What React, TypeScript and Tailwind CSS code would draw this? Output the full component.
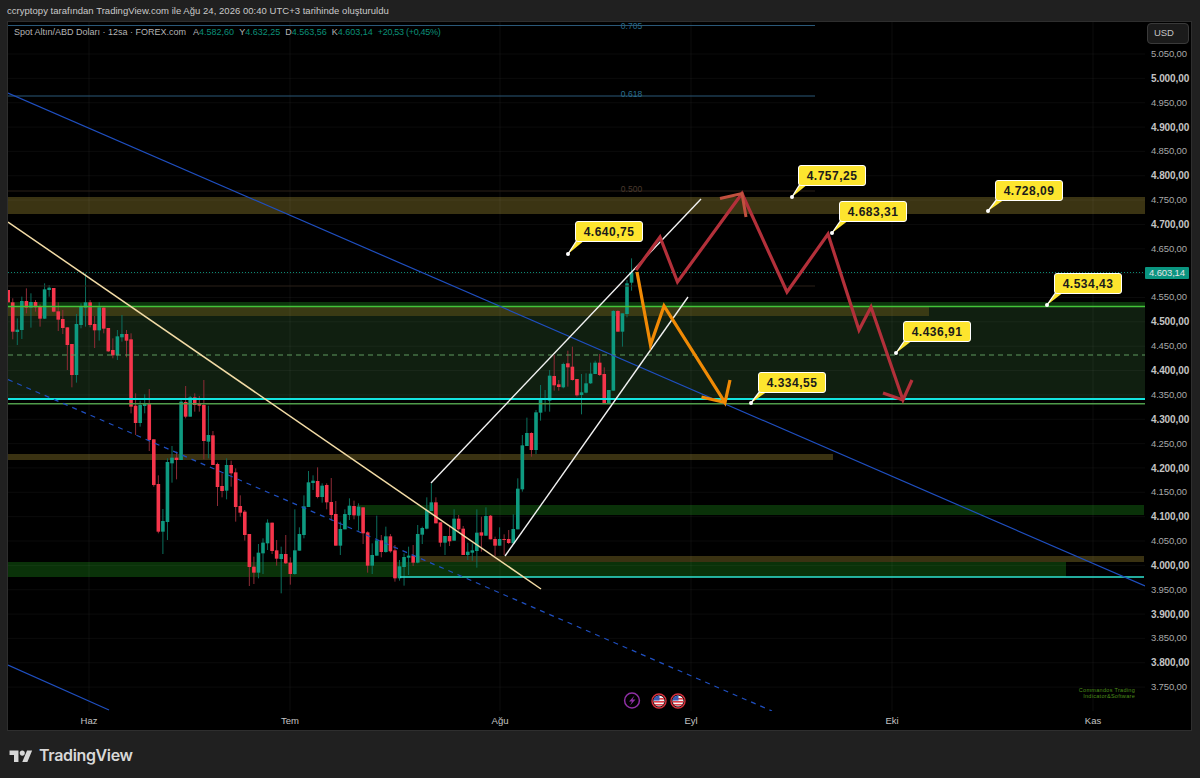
import React from 'react'

// page coordinates: plot starts at (8,22), 1137x689
type Row = [string, number, number, number, number]

// rows are read at 3x, y0 is the offset of each block
const blocks: { y0: number; rows: Row[] }[] = [
  {
    y0: 270,
    rows: [
      ['r', 60, 97, 60, 97], ['r', 97, 185, 85, 208], ['g', 179, 186, 145, 225], ['g', 93, 180, 80, 207],
      ['r', 93, 113, 55, 130], ['g', 96, 113, 70, 173], ['r', 96, 112, 90, 125], ['r', 110, 146, 103, 170],
      ['g', 58, 146, 40, 147], ['g', 53, 60, 45, 80], ['r', 54, 125, 54, 127], ['r', 124, 149, 97, 183],
      ['r', 147, 174, 120, 192], ['r', 172, 225, 172, 300], ['r', 222, 315, 222, 352], ['g', 162, 315, 132, 338],
      ['g', 108, 165, 100, 175], ['g', 97, 113, 10, 170], ['r', 97, 165, 90, 172], ['r', 162, 181, 138, 234],
      ['g', 112, 181, 97, 212], ['r', 113, 176, 110, 190], ['r', 174, 244, 174, 246], ['r', 240, 256, 205, 265],
      ['g', 199, 256, 180, 270], ['g', 192, 202, 135, 215], ['r', 192, 212, 180, 262], ['r', 208, 410, 190, 430],
    ],
  },
  {
    y0: 370,
    rows: [
      ['r', 107, 159, 70, 195], ['g', 105, 159, 92, 170], ['g', 102, 108, 73, 130], ['r', 102, 210, 57, 243],
      ['r', 208, 345, 208, 350], ['r', 342, 485, 316, 490], ['g', 453, 485, 417, 552], ['g', 276, 456, 265, 510],
      ['g', 263, 280, 228, 338], ['r', 263, 270, 245, 328], ['g', 95, 270, 85, 270], ['r', 96, 140, 48, 145],
      ['g', 82, 140, 78, 140], ['r', 82, 105, 70, 125], ['r', 100, 107, 78, 125], ['r', 105, 213, 30, 268],
      ['g', 195, 215, 107, 265], ['r', 196, 285, 183, 285], ['r', 282, 351, 278, 408], ['r', 348, 363, 310, 382],
      ['g', 285, 362, 265, 388], ['r', 285, 310, 272, 350], ['r', 307, 411, 295, 455], ['r', 408, 428, 376, 440],
      ['r', 425, 495, 420, 512], ['r', 492, 591, 492, 648], ['r', 590, 608, 560, 642], ['g', 548, 608, 522, 625],
      ['g', 518, 550, 505, 612], ['g', 458, 520, 448, 540], ['r', 458, 543, 458, 552], ['r', 541, 566, 510, 587],
      ['g', 552, 567, 530, 670], ['r', 552, 580, 495, 582], ['r', 578, 612, 562, 644], ['g', 541, 612, 418, 614],
      ['g', 492, 542, 472, 542], ['g', 409, 495, 376, 505], ['g', 337, 411, 303, 411], ['g', 332, 339, 316, 360],
      ['r', 333, 381, 292, 385], ['g', 347, 381, 340, 398], ['r', 345, 397, 340, 418], ['r', 396, 435, 324, 452],
      ['r', 432, 527, 393, 527], ['g', 477, 527, 455, 555], ['g', 432, 478, 418, 478], ['g', 407, 435, 385, 450],
      ['r', 408, 436, 392, 448], ['g', 410, 437, 400, 482], ['r', 412, 490, 412, 522], ['r', 487, 587, 484, 608],
      ['g', 555, 587, 520, 612], ['g', 511, 557, 437, 557], ['r', 511, 546, 495, 562], ['g', 499, 546, 470, 548],
      ['r', 499, 544, 492, 548], ['r', 541, 625, 525, 635], ['g', 589, 625, 570, 632], ['g', 561, 591, 550, 647],
      ['g', 557, 563, 530, 615], ['r', 557, 578, 525, 588], ['g', 492, 578, 465, 580], ['g', 474, 494, 470, 522],
      ['g', 420, 476, 382, 478],
    ],
  },
  {
    y0: 400,
    rows: [
      ['g', 307, 333, 250, 333], ['r', 307, 370, 292, 370], ['r', 367, 428, 367, 440], ['g', 408, 428, 408, 465],
      ['r', 408, 424, 378, 438], ['g', 356, 422, 328, 422], ['r', 356, 388, 345, 392], ['r', 386, 465, 378, 465],
      ['g', 455, 465, 428, 480], ['g', 451, 458, 430, 482], ['g', 398, 453, 328, 503], ['r', 397, 407, 350, 455],
      ['g', 348, 407, 322, 408], ['r', 347, 418, 345, 418], ['r', 417, 437, 410, 468], ['g', 417, 437, 382, 437],
      ['r', 417, 420, 403, 465], ['r', 417, 429, 390, 432], ['g', 387, 430, 343, 430], ['g', 266, 388, 235, 388],
      ['g', 136, 268, 105, 275], ['g', 99, 138, 53, 138], ['r', 99, 150, 97, 170], ['g', 37, 150, 30, 162],
    ],
  },
  {
    y0: 230,
    rows: [
      ['g', 507, 548, 465, 572], ['g', 505, 510, 480, 545], ['g', 437, 512, 420, 545], ['r', 438, 466, 375, 482],
      ['r', 463, 471, 450, 482], ['g', 402, 472, 398, 475], ['r', 400, 412, 362, 470], ['r', 410, 450, 350, 452],
      ['r', 447, 496, 447, 500], ['g', 487, 495, 432, 553], ['g', 460, 488, 430, 490], ['g', 431, 460, 398, 462],
      ['g', 398, 432, 392, 432], ['r', 398, 435, 372, 438], ['r', 432, 522, 412, 522], ['g', 480, 520, 480, 520],
      ['g', 243, 482, 240, 482], ['r', 243, 305, 240, 305], ['g', 250, 305, 250, 350], ['g', 160, 252, 150, 262],
      ['g', 128, 158, 85, 182],
    ],
  },
]

const candles = blocks.flatMap((b) =>
  b.rows.map((r) => ({
    up: r[0] === 'g',
    top: b.y0 + r[1] / 3,
    bot: b.y0 + r[2] / 3,
    wt: b.y0 + r[3] / 3,
    wb: b.y0 + r[4] / 3,
  }))
)

const prices = [
  '5.050,00', '5.000,00', '4.950,00', '4.900,00', '4.850,00', '4.800,00', '4.750,00', '4.700,00', '4.650,00',
  '', '4.550,00', '4.500,00', '4.450,00', '4.400,00', '4.350,00', '4.300,00', '4.250,00', '4.200,00', '4.150,00',
  '4.100,00', '4.050,00', '4.000,00', '3.950,00', '3.900,00', '3.850,00', '3.800,00', '3.750,00',
]

const months = [
  { t: 'Haz', x: 89 },
  { t: 'Tem', x: 290 },
  { t: 'Ağu', x: 500 },
  { t: 'Eyl', x: 691 },
  { t: 'Eki', x: 892 },
  { t: 'Kas', x: 1093 },
]

const callouts = [
  { t: '4.640,75', x: 575, y: 221, dx: 568, dy: 254 },
  { t: '4.757,25', x: 798, y: 165, dx: 792, dy: 197 },
  { t: '4.683,31', x: 839, y: 201, dx: 832, dy: 233 },
  { t: '4.728,09', x: 995, y: 180, dx: 988, dy: 211 },
  { t: '4.534,43', x: 1054, y: 273, dx: 1047, dy: 305 },
  { t: '4.436,91', x: 903, y: 321, dx: 896, dy: 353 },
  { t: '4.334,55', x: 758, y: 372, dx: 751, dy: 403 },
]

const zones = [
  { x: 8, w: 1137, y: 197, h: 17, c: '#3b3413' },
  { x: 8, w: 1137, y: 302, h: 5, c: '#0c350c' },
  { x: 8, w: 1137, y: 307, h: 92, c: '#101f10' },
  { x: 8, w: 921, y: 307, h: 9, c: '#3a3a14' },
  { x: 8, w: 825, y: 454, h: 6, c: '#3a3212' },
  { x: 357, w: 787, y: 505, h: 10, c: '#0a3209' },
  { x: 418, w: 726, y: 556, h: 6, c: '#3a3212' },
  { x: 8, w: 1058, y: 562, h: 15, c: '#0a3209' },
]

const fibs = [
  { t: '0.705', y: 25.5, ty: 27, c: '#2a5878', tc: '#2a6a8a' },
  { t: '0.618', y: 96, ty: 95, c: '#2a5878', tc: '#2a6f90' },
  { t: '0.500', y: 191, ty: 190, c: '#2a2018', tc: '#4a3a2e' },
  { t: '', y: 286, ty: 285, c: '#2a2018', tc: '' },
]

function Flag({ cx }: { cx: number }) {
  return (
    <g>
      <clipPath id={`flag${cx}`}>
        <circle cx={cx} cy={701} r={5.5} />
      </clipPath>
      <g clipPath={`url(#flag${cx})`}>
        <rect x={cx - 6} y={695} width={12} height={12} fill="#f4f4f4" />
        <rect x={cx - 6} y={698} width={12} height={1.6} fill="#e0404a" />
        <rect x={cx - 6} y={701} width={12} height={1.6} fill="#e0404a" />
        <rect x={cx - 6} y={704} width={12} height={1.6} fill="#e0404a" />
        <rect x={cx - 6} y={695} width={6.5} height={5.5} fill="#3b5bb5" />
      </g>
      <circle cx={cx} cy={701} r={7} fill="none" stroke="#d9303c" strokeWidth={1.4} />
    </g>
  )
}

function ChartDrawing() {
  return (
    <svg className="absolute inset-0 h-full w-full" viewBox="8 22 1137 689">
      {zones.map((z, i) => (
        <rect key={i} x={z.x} y={z.y} width={z.w} height={z.h} fill={z.c} />
      ))}

      {Array.from({ length: 28 }, (_, i) => (
        <line key={i} x1={8} x2={1145} y1={54 + i * 24.35} y2={54 + i * 24.35} stroke="#fff" strokeOpacity={0.045} />
      ))}
      {months.map((m) => (
        <line key={m.t} x1={m.x} x2={m.x} y1={22} y2={711} stroke="#fff" strokeOpacity={0.05} />
      ))}

      {candles.map((c, i) => {
        const x = 8.2 + 4.55 * i
        return (
          <g key={i}>
            <line x1={x} x2={x} y1={c.wt} y2={c.wb} stroke={c.up ? '#0b6e5d' : '#8e2b36'} strokeWidth={1} />
            <rect x={x - 1.8} y={c.top} width={3.6} height={c.bot - c.top} fill={c.up ? '#0e9a80' : '#f5354b'} />
          </g>
        )
      })}

      {fibs.map((f) => (
        <g key={f.y}>
          <line x1={8} x2={815} y1={f.y} y2={f.y} stroke={f.c} strokeWidth={1.2} />
          {f.t && (
            <text x={631.5} y={f.ty} textAnchor="middle" fill={f.tc} fontSize={8.5} dominantBaseline="middle" fontFamily="'Liberation Sans', sans-serif">
              {f.t}
            </text>
          )}
        </g>
      ))}

      <line x1={8} x2={1145} y1={272.5} y2={272.5} stroke="#0b8a75" strokeDasharray="1 2" />
      <line x1={8} x2={1145} y1={355} y2={355} stroke="#5f9a5f" strokeDasharray="5 4" />
      <line x1={8} x2={1145} y1={306.4} y2={306.4} stroke="#43c43a" strokeWidth={1.5} />
      <line x1={8} x2={1145} y1={403.7} y2={403.7} stroke="#4f9c4a" strokeWidth={1.4} />
      <line x1={8} x2={1145} y1={399} y2={399} stroke="#14e4e0" strokeWidth={2} />
      <line x1={400} x2={1144} y1={577} y2={577} stroke="#2fe3d2" strokeWidth={1.6} />

      <line x1={8} y1={93} x2={1145} y2={586} stroke="#1f4fc0" strokeWidth={1.2} />
      <line x1={8} y1={379.5} x2={772} y2={711} stroke="#1f4fc0" strokeWidth={1.2} strokeDasharray="5 5" />
      <line x1={8} y1={665} x2={109} y2={710} stroke="#1f4fc0" strokeWidth={1.2} />
      <line x1={8} y1={222} x2={541} y2={589} stroke="#f3dca6" strokeWidth={1.5} />
      <line x1={431} y1={483} x2={701} y2={199} stroke="#f2f2f2" strokeWidth={1.4} />
      <line x1={505} y1={556} x2={688} y2={297} stroke="#f2f2f2" strokeWidth={1.4} />

      <polyline
        points="636,270 660,237 677.5,282 742,193.5 787,292 828,234 859,330 871,307 903,400 912,380"
        fill="none"
        stroke="#b3303a"
        strokeWidth={3.2}
      />
      <polyline points="720,198.5 742,193.5 746,217" fill="none" stroke="#c2503f" strokeWidth={3} />
      <polyline points="883,393 903,400" fill="none" stroke="#b3303a" strokeWidth={3.2} />
      <polyline points="637,272 650.5,345 664,306 725,402.5 730,380" fill="none" stroke="#f08a05" strokeWidth={3.2} />
      <polyline points="701.5,397 725,402.5" fill="none" stroke="#f08a05" strokeWidth={3.2} />

      {callouts.map((c) => (
        <g key={c.t}>
          <polygon points={`${c.dx},${c.dy} ${c.x + 2},${c.y + 19} ${c.x + 10},${c.y + 19}`} fill="#fde52e" />
          <line x1={c.dx} y1={c.dy} x2={c.x + 2} y2={c.y + 19} stroke="#fff" strokeWidth={1.3} />
          <circle cx={c.dx} cy={c.dy} r={2} fill="#fff" />
        </g>
      ))}

      <circle cx={632} cy={700.5} r={7.4} fill="none" stroke="#8e2fa3" strokeWidth={1.5} />
      <path d="M634.5 695.5 L629 701.5 L632 701.5 L630 705.5 L635.5 699.5 L632.5 699.5 Z" fill="#8e2fa3" />
      <Flag cx={659} />
      <Flag cx={678} />
    </svg>
  )
}

export default function App() {
  return (
    <div className="flex h-[778px] w-[1200px] flex-col overflow-hidden bg-[#202020] font-['Liberation_Sans',sans-serif]">
      <div className="flex h-[21px] items-center whitespace-nowrap px-[7px] pt-[1px] text-[9.5px] tracking-[0.03px] text-[#c9c9c9]">
        ccryptopy tarafından TradingView.com ile Ağu 24, 2026 00:40 UTC+3 tarihinde oluşturuldu
      </div>

      <div className="mx-[7px] flex h-[710px] w-[1185px] flex-col border border-[#2e2e2e] bg-black">
        <div className="flex h-[689px]">
          <div className="relative h-[689px] w-[1137px] shrink-0 overflow-hidden">
            <ChartDrawing />
            <div className="absolute left-[6px] top-[4px] flex whitespace-nowrap text-[9px] leading-[13px] text-[#b4b4b4]">
              <span>Spot Altın/ABD Doları · 12sa · FOREX.com</span>
              <span className="ml-[7px]">
                A<span className="text-[#0b8f78]">4.582,60</span>
              </span>
              <span className="ml-[5px]">
                Y<span className="text-[#0b8f78]">4.632,25</span>
              </span>
              <span className="ml-[5px]">
                D<span className="text-[#0b8f78]">4.563,56</span>
              </span>
              <span className="ml-[5px]">
                K<span className="text-[#0b8f78]">4.603,14</span>
              </span>
              <span className="ml-[5px] tracking-[-0.3px] text-[#0b8f78]">+20,53 (+0,45%)</span>
            </div>
            {callouts.map((c) => (
              <div
                key={c.t}
                className="absolute flex h-[21px] w-[68px] items-center justify-center rounded-[3px] border border-white bg-[#fde52e] text-[12px] font-bold tracking-[0.5px] text-[#1b1b1b]"
                style={{ left: c.x - 8, top: c.y - 22 }}
              >
                {c.t}
              </div>
            ))}
            <div className="absolute bottom-[12px] right-[10px] whitespace-nowrap text-right text-[5.5px] leading-[6px] tracking-[0.3px] text-[#4c8f1a]">
              <div>Commandos Trading</div>
              <div>Indicator&amp;Software</div>
            </div>
          </div>

          <div className="relative w-[46px] shrink-0 whitespace-nowrap pt-[20px] text-[9.5px] tracking-[-0.15px] text-[#a8a8a8]">
            <div className="absolute left-[2px] top-[1px] flex h-[21px] w-[42px] items-center rounded-[4px] border border-[#3a3a3a] bg-[#1b1b1b] pl-[6px] text-[9.5px] text-[#c4c4c4]">
              USD
            </div>
            {prices.map((p, i) => (
              <div
                key={i}
                className={`flex h-[24.35px] items-center pl-[6px] ${i % 2 === 1 ? 'text-[10px] font-bold tracking-[-0.1px] text-[#c4c4c4]' : ''}`}
              >
                {p}
              </div>
            ))}
            <div className="absolute left-0 top-[245px] flex h-[12px] w-[44px] items-center justify-center rounded-[1px] bg-[#0a9580] text-[9.5px] text-[#e4e4e4]">
              4.603,14
            </div>
          </div>
        </div>

        <div className="relative flex-1 text-[9.5px] text-[#c4c4c4]">
          {months.map((m) => (
            <span key={m.t} className="absolute top-[3px] -translate-x-1/2" style={{ left: m.x - 8 }}>
              {m.t}
            </span>
          ))}
        </div>
      </div>

      <div className="flex flex-1 items-center gap-[6px] pl-[9px]">
        <svg width="24" height="14" viewBox="0 0 36 22" className="text-[#d8d8d8]">
          <path d="M14 22H7V11H0V4h14v18zM28 22h-8l7.5-18h8L28 22z" fill="currentColor" />
          <circle cx="20" cy="8" r="4" fill="currentColor" />
        </svg>
        <span className="font-['Inter',sans-serif] text-[16px] font-semibold tracking-[-0.35px] text-[#d8d8d8]">TradingView</span>
      </div>
    </div>
  )
}
